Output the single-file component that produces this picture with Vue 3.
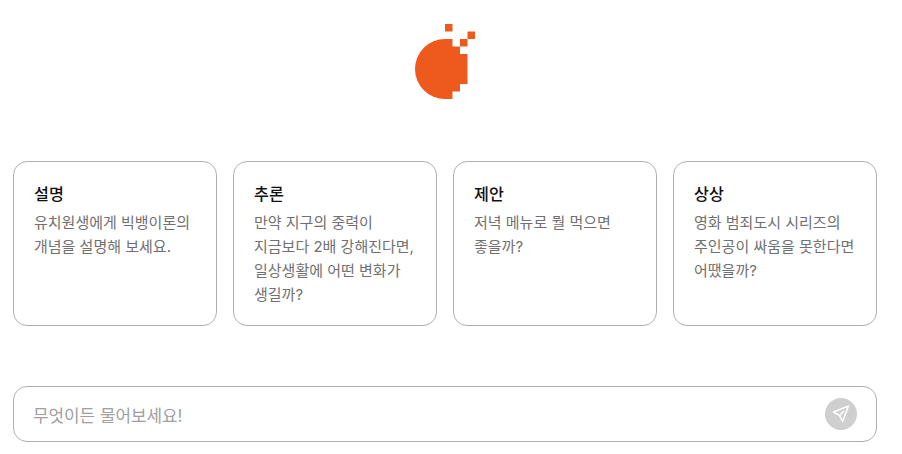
<template>
  <div class="page">
    <div class="logo">
      <svg width="62" height="76" viewBox="414 24 62 76">
        <path
          fill="#ee5a1e"
          d="M445 39H452.5V46.5H460V54H467.5V84H460V91.5H452.5V99H445A30 30 0 0 1 445 39Z"
        />
        <rect x="445" y="24" width="7.5" height="7.5" fill="#ee5a1e" />
        <rect x="467.5" y="31.5" width="7.5" height="7.5" fill="#ee5a1e" />
        <rect x="460" y="39" width="7.5" height="7.5" fill="#ee5a1e" />
      </svg>
    </div>

    <div class="cards">
      <div v-for="card in cards" :key="card.title" class="card">
        <h3>{{ card.title }}</h3>
        <p v-for="line in card.lines" :key="line">{{ line }}</p>
      </div>
    </div>

    <div class="ask">
      <span class="placeholder">무엇이든 물어보세요!</span>
      <button class="send">
        <svg width="18" height="18" viewBox="0 0 18 18" fill="none" stroke="#fff" stroke-width="1.5" stroke-linejoin="round">
          <path d="M16.5 1L1.5 7L7.5 10.5L10.5 16.5L16.5 1Z" />
          <path d="M7.5 10.5L11.5 6.5" stroke-linecap="round" />
        </svg>
      </button>
    </div>
  </div>
</template>

<script setup>
const cards = [
  { title: "설명", lines: ["유치원생에게 빅뱅이론의", "개념을 설명해 보세요."] },
  {
    title: "추론",
    lines: ["만약 지구의 중력이", "지금보다 2배 강해진다면,", "일상생활에 어떤 변화가", "생길까?"],
  },
  { title: "제안", lines: ["저녁 메뉴로 뭘 먹으면", "좋을까?"] },
  { title: "상상", lines: ["영화 범죄도시 시리즈의", "주인공이 싸움을 못한다면", "어땠을까?"] },
];
</script>

<style scoped>
.page {
  width: 902px;
  height: 454px;
  box-sizing: border-box;
  padding: 24px 25px 0 13px;
  overflow: hidden;
  background: #fff;
  font-family: Inter, "Noto Sans CJK KR", sans-serif;
}
.logo {
  display: flex;
  justify-content: center;
  height: 137px;
}
.logo svg {
  display: block;
}
.cards {
  display: flex;
  gap: 16px;
}
.card {
  flex: 1;
  height: 165px;
  box-sizing: border-box;
  padding: 20px 20px 0;
  border: 1px solid #b0b0b0;
  border-radius: 14px;
}
.card h3 {
  margin: 0 0 5px;
  font-size: 16.2px;
  line-height: 24px;
  font-weight: 500;
  color: #111;
}
.card p {
  margin: 0;
  font-size: 15px;
  line-height: 24px;
  color: #707070;
}
.ask {
  display: flex;
  align-items: center;
  justify-content: space-between;
  height: 56px;
  box-sizing: border-box;
  margin-top: 60px;
  padding: 0 19px 0 19px;
  border: 1px solid #b0b0b0;
  border-radius: 14px;
}
.placeholder {
  font-size: 16.9px;
  color: #a0a0a0;
}
.send {
  display: flex;
  align-items: center;
  justify-content: center;
  width: 32px;
  height: 32px;
  padding: 0;
  border: none;
  border-radius: 50%;
  background: #cfcfcf;
}
</style>
